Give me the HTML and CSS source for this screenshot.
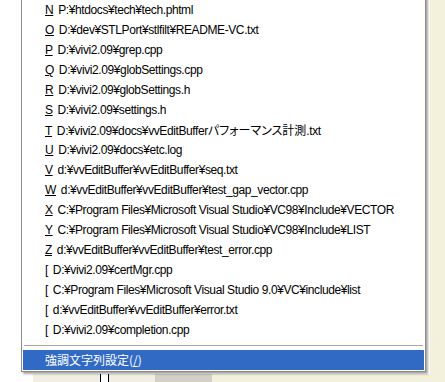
FILE: index.html
```html
<!DOCTYPE html>
<html lang="ja">
<head>
  <meta charset="UTF-8">
  <meta name="viewport" content="width=device-width, initial-scale=1.0">
  <title>最近使ったファイル</title>
  <link rel="stylesheet" href="styles.css">
</head>
<body>

  <div class="desk">
    <div class="doc">
      <div class="doc-body"></div>
      <div class="doc-foot">
        <span class="seg seg-white"></span>
        <span class="seg seg-face"></span>
        <span class="seg seg-line"></span>
        <span class="seg seg-gap"></span>
        <span class="seg seg-line"></span>
        <span class="seg seg-face2"></span>
        <span class="seg seg-gray"></span>
        <span class="seg seg-rest"></span>
      </div>
    </div>
    <div class="side"></div>
  </div>

  <!-- popup menu: recent files -->
  <div class="menu">
    <div class="item"><u>N</u> P:¥htdocs¥tech¥tech.phtml</div>
    <div class="item"><u>O</u> D:¥dev¥STLPort¥stlfilt¥README-VC.txt</div>
    <div class="item"><u>P</u> D:¥vivi2.09¥grep.cpp</div>
    <div class="item"><u>Q</u> D:¥vivi2.09¥globSettings.cpp</div>
    <div class="item"><u>R</u> D:¥vivi2.09¥globSettings.h</div>
    <div class="item"><u>S</u> D:¥vivi2.09¥settings.h</div>
    <div class="item"><u>T</u> D:¥vivi2.09¥docs¥vvEditBuffer<span class="ja">パフォーマンス計測</span>.txt</div>
    <div class="item"><u>U</u> D:¥vivi2.09¥docs¥etc.log</div>
    <div class="item"><u>V</u> d:¥vvEditBuffer¥vvEditBuffer¥seq.txt</div>
    <div class="item"><u>W</u> d:¥vvEditBuffer¥vvEditBuffer¥test_gap_vector.cpp</div>
    <div class="item"><u>X</u> C:¥Program Files¥Microsoft Visual Studio¥VC98¥Include¥VECTOR</div>
    <div class="item"><u>Y</u> C:¥Program Files¥Microsoft Visual Studio¥VC98¥Include¥LIST</div>
    <div class="item"><u>Z</u> d:¥vvEditBuffer¥vvEditBuffer¥test_error.cpp</div>
    <div class="item"><u>[</u> D:¥vivi2.09¥certMgr.cpp</div>
    <div class="item"><u>[</u> C:¥Program Files¥Microsoft Visual Studio 9.0¥VC¥include¥list</div>
    <div class="item"><u>[</u> d:¥vvEditBuffer¥vvEditBuffer¥error.txt</div>
    <div class="item"><u>[</u> D:¥vivi2.09¥completion.cpp</div>
    <div class="separator"></div>
    <div class="item selected">強調文字列設定(<u>/</u>)</div>
  </div>

</body>
</html>
```

FILE: styles.css
```css
body {
  margin: 0;
  font-family: "Liberation Sans", "Noto Sans CJK JP", sans-serif;
  font-size: 12px;
  overflow: hidden;
}
.desk {
  display: flex;
  height: 382px;
}
.doc {
  width: 430px;
  display: flex;
  flex-direction: column;
}
.doc-body {
  flex: 1;
  background-color: #fff;
}
.doc-foot {
  height: 8px;
  display: flex;
}
.seg {
  display: block;
  height: 100%;
}
.seg-white { width: 33px; background-color: #fff; }
.seg-face { width: 67px; background-color: #f1efe3; }
.seg-line { width: 1px; background-color: #000; }
.seg-gap { width: 7px; background-color: #fff; }
.seg-face2 { width: 46px; background-color: #f1efe3; }
.seg-gray { width: 57px; background-color: #d4d0c8; }
.seg-rest { flex: 1; background-color: #f3f1dc; }
.side {
  flex: 1;
  background-color: #f3f1dc;
}

.menu {
  position: absolute;
  left: 21px;
  top: -3px;
  width: 403px;
  padding: 2px 0 1px;
  background-color: #fff;
  border: 1px solid #8e8b80;
  box-shadow: 2px 2px 2px rgba(0, 0, 0, 0.35);
}
.item {
  height: 20px;
  line-height: 20px;
  margin: 0 1px;
  padding-left: 22px;
  color: #000;
  letter-spacing: -0.4px;
  white-space: nowrap;
}
.item u {
  margin-right: 2px;
}
.ja {
  font-family: "Noto Sans CJK JP", sans-serif;
  font-feature-settings: "palt";
  letter-spacing: 0;
}
.separator {
  height: 1px;
  margin: 5px 2px 4px;
  background-color: #aca899;
}
.selected {
  background-color: #316ac5;
  color: #fff;
  letter-spacing: 0;
  font-family: "Noto Sans CJK JP", sans-serif;
}
.selected u {
  margin-right: 0;
}
```
